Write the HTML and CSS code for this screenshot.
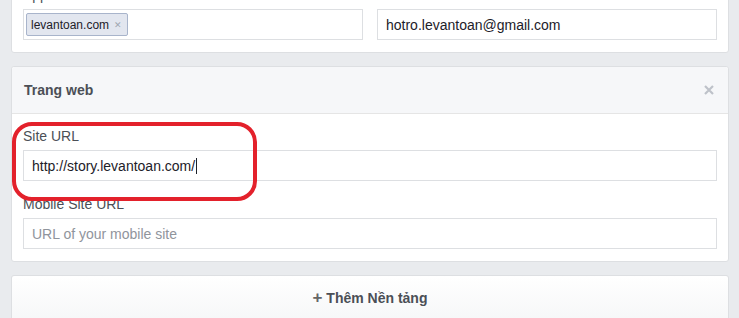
FILE: index.html
```html
<!DOCTYPE html>
<html lang="vi">
<head>
    <meta charset="UTF-8">
    <meta name="viewport" content="width=device-width, initial-scale=1.0">
    <title>Cài đặt ứng dụng</title>
    <link rel="stylesheet" href="styles.css">
</head>
<body>
    <main class="settings">
        <section class="card card-basic">
            <div class="row">
                <div class="field-group">
                    <label class="field-label">App Domains</label>
                    <div class="field tokens">
                        <span class="token">levantoan.com <span class="token-x">&#10005;</span></span>
                    </div>
                </div>
                <div class="field-group">
                    <label class="field-label">Contact Email</label>
                    <div class="field">hotro.levantoan@gmail.com</div>
                </div>
            </div>
        </section>

        <section class="card card-platform">
            <header class="card-header">
                <h2>Trang web</h2>
                <svg class="close" width="10" height="10" viewBox="0 0 10 10">
                    <path d="M1 1 L9 9 M9 1 L1 9" stroke="#bec2c9" stroke-width="2.2"/>
                </svg>
            </header>
            <div class="card-body">
                <div class="field-group">
                    <label class="field-label">Site URL</label>
                    <div class="field">http://story.levantoan.com/<span class="caret"></span></div>
                </div>
                <div class="field-group">
                    <label class="field-label">Mobile Site URL</label>
                    <div class="field placeholder">URL of your mobile site</div>
                </div>
            </div>
            <!-- annotation drawn over the screenshot -->
            <div class="highlight"></div>
        </section>

        <section class="card card-add">
            <span class="plus">+</span> Thêm Nền tảng
        </section>
    </main>
</body>
</html>
```

FILE: styles.css
```css
* { margin: 0; padding: 0; box-sizing: border-box; }
body { font-family: "Liberation Sans", Arial, sans-serif; font-size: 14px; color: #1d2129; background: #e9ebee; overflow: hidden; }
.settings { display: flex; flex-direction: column; gap: 13px; padding: 0 10px 0 11px; margin-top: -27px; }
.card { background: #fff; border: 1px solid #dddfe2; border-radius: 3px; }
.card-basic { padding: 12px 11px; }
.row { display: flex; gap: 14px; }
.row .field-group { flex: 1; }
.field-group { display: flex; flex-direction: column; gap: 5px; }
.field-label { color: #4b4f56; font-size: 14px; line-height: 18px; }
.field { height: 31px; border: 1px solid #dddfe2; padding: 0 8px; display: flex; align-items: center; color: #1d2129; background: #fff; }
.field.placeholder { color: #90949c; }
.tokens { padding: 0 2px; }
.token { display: flex; align-items: center; height: 23px; padding: 0 5px 0 4px; font-size: 12px; background: #e2e6ef; border: 1px solid #a8b4cb; border-radius: 2px; }
.token-x { font-size: 9px; color: #a0a6b1; margin-left: 5px; }
.caret { display: inline-block; width: 1px; height: 16px; background: #1d2129; margin-left: 1px; }

.card-platform { position: relative; }
.card-header { height: 47px; display: flex; align-items: center; justify-content: space-between; padding: 0 14px 0 12px; background: #f6f7f9; border-bottom: 1px solid #e5e5e5; border-radius: 3px 3px 0 0; }
.card-header h2 { font-size: 14px; font-weight: bold; color: #4b4f56; }
.card-body { display: flex; flex-direction: column; gap: 14px; padding: 13px 11px 12px; }
.highlight { position: absolute; left: 0; top: 55px; width: 245px; height: 79px; border: 4px solid #e3212b; border-radius: 20px; }

.card-add { height: 52px; padding-top: 12px; text-align: center; font-weight: bold; color: #4b4f56; background: linear-gradient(#fff, #f5f6f7); }
.plus { color: #666; font-weight: bold; font-size: 17px; }
```
